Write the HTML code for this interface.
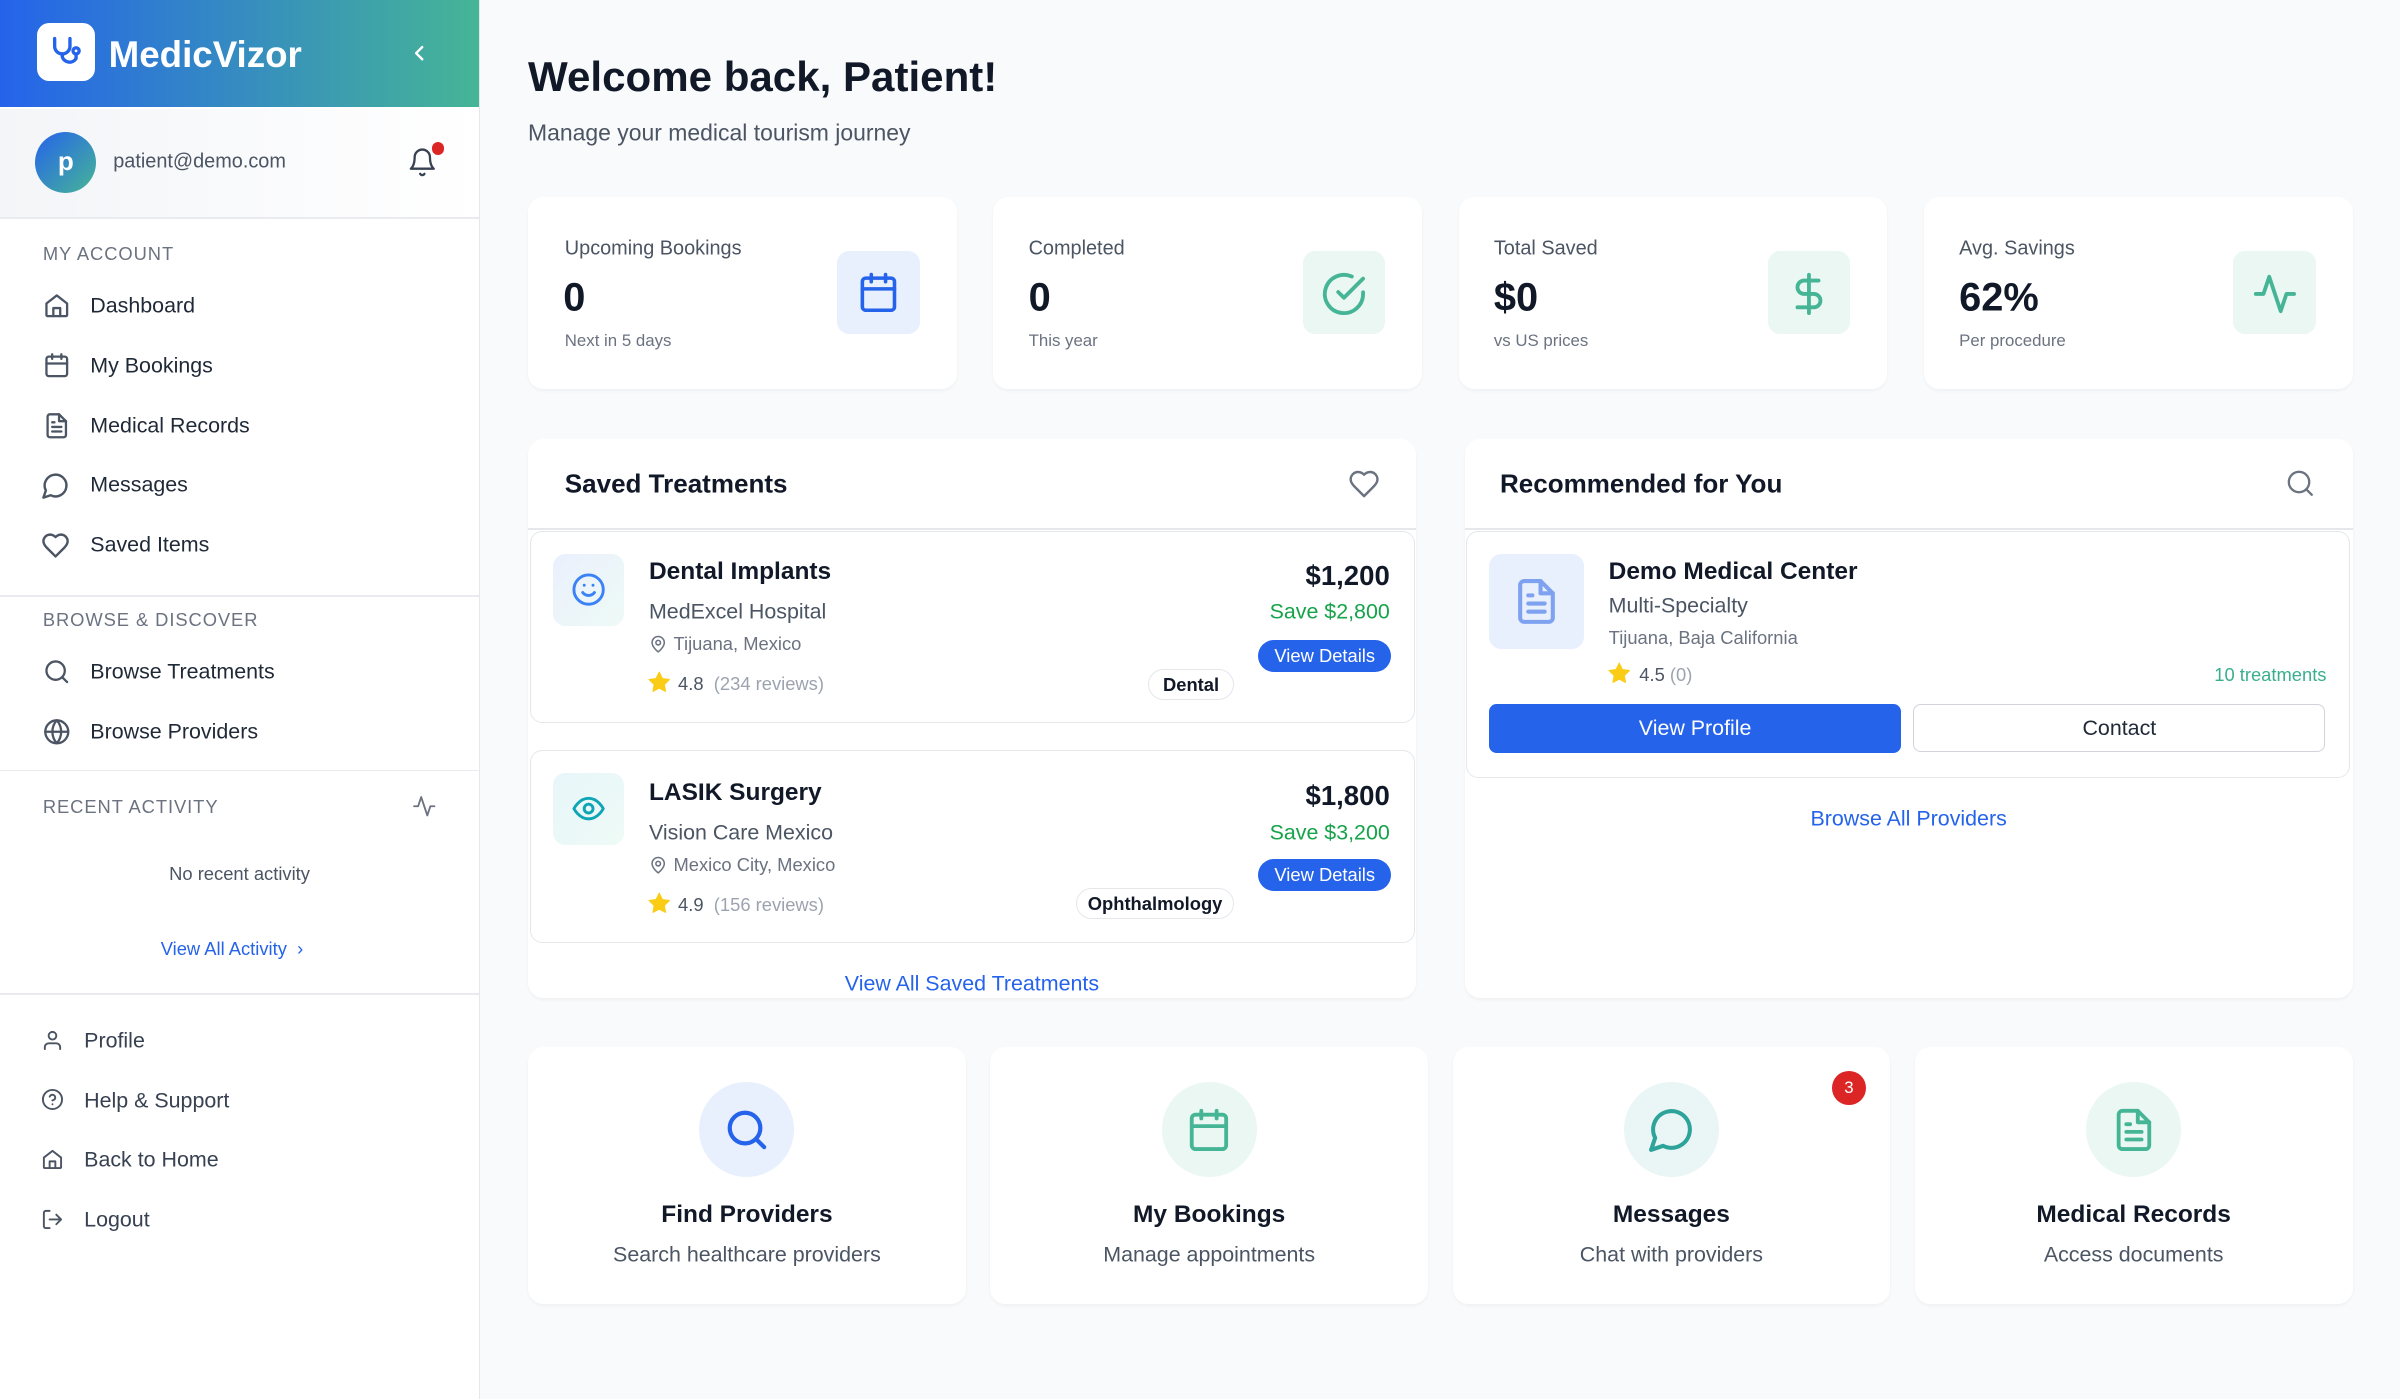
<!DOCTYPE html>
<html><head><meta charset="utf-8"><style>
html,body{margin:0;padding:0;}
body{width:2400px;height:1398px;overflow:hidden;background:#f8fafc;font-family:"Liberation Sans",sans-serif;}
#z{zoom:1.5306;width:1568px;height:914px;position:relative;}
.a{position:absolute;}
.c{position:absolute;transform:translateY(-50%);white-space:nowrap;}
.side{left:0;top:0;width:313px;height:914px;background:#fff;border-right:1px solid #e5e7eb;}
.hl{height:1px;background:#e9ebef;left:0;width:313px;}
.sec{font-size:12px;color:#6b7280;letter-spacing:.6px;font-weight:500;left:28px;}
.nav{font-size:14px;color:#1f2937;left:59px;font-weight:500;}
.nav2{font-size:14px;color:#374151;left:55px;}
svg{position:absolute;fill:none;stroke-linecap:round;stroke-linejoin:round;}
svg.star{fill:#facc15;}
.card{background:#fff;border-radius:10px;box-shadow:0 1px 2px rgba(0,0,0,.04);}
.lbl{font-size:13px;color:#4b5563;}
.val{font-size:26px;font-weight:700;color:#111827;}
.sub{font-size:11px;color:#6b7280;}
.ib{border-radius:8px;width:54px;height:54px;top:164px;}
.item{border:1px solid #e5e7eb;border-radius:8px;background:#fff;}
.t16{font-size:16px;font-weight:600;color:#111827;}
.g14{font-size:14px;color:#4b5563;}
.g12{font-size:12px;color:#6b7280;}
.btn{background:#2563eb;color:#fff;font-size:12px;border-radius:11px;text-align:center;line-height:21px;}
.tag{border:1px solid #e5e7eb;border-radius:11px;font-size:12px;font-weight:600;color:#111827;text-align:center;line-height:19px;}
.link{color:#2563eb;font-size:14px;font-weight:500;text-align:center;}
.bc{top:684px;width:286px;height:168px;}
.circ{width:62px;height:62px;border-radius:50%;left:112px;top:23px;}
.bt{font-size:16px;font-weight:600;color:#111827;width:100%;text-align:center;top:110px;}
.bs{font-size:14px;color:#4b5563;width:100%;text-align:center;top:136px;}
</style></head><body><div id="z">

<div class="a side"></div>
<div class="a" style="left:0;top:0;width:313px;height:70px;background:linear-gradient(90deg,#2563eb,#46b596);"></div>
<div class="a" style="left:24px;top:15px;width:38px;height:38px;background:#fff;border-radius:8px;"></div>
<svg style="left:31px;top:22px" width="24" height="24" viewBox="0 0 24 24" stroke="#2563eb" stroke-width="2.2"><path d="M5 3v5a5 5 0 0 0 10 0V3"/><path d="M10 13v2a5 5 0 0 0 9 1v-2"/><circle cx="19" cy="11" r="2"/></svg>
<div class="c" style="left:71px;top:36px;font-size:24px;font-weight:700;color:#fff;">MedicVizor</div>
<svg style="left:268px;top:29px" width="12" height="12" viewBox="0 0 12 12" stroke="#fff" stroke-width="1.6"><path d="M8 2L4 6l4 4"/></svg>
<div class="a" style="left:0;top:71px;width:313px;height:71px;background:linear-gradient(90deg,#f3f5f8,#fff);"></div>
<div class="a" style="left:23px;top:86px;width:40px;height:40px;border-radius:50%;background:linear-gradient(135deg,#2563eb,#46b596);color:#fff;font-weight:700;font-size:17px;text-align:center;line-height:38px;">p</div>
<div class="c" style="left:74px;top:106px;font-size:13px;color:#4b5563;">patient@demo.com</div>
<svg style="left:266px;top:96px" width="20" height="20" viewBox="0 0 24 24" stroke="#374151" stroke-width="1.8"><path d="M6 8a6 6 0 0 1 12 0c0 7 3 9 3 9H3s3-2 3-9"/><path d="M10.3 21a1.9 1.9 0 0 0 3.4 0"/></svg>
<div class="a" style="left:282px;top:93px;width:8px;height:8px;border-radius:50%;background:#dc2626;"></div>
<div class="a hl" style="top:142px"></div>

<div class="c sec" style="top:166px">MY ACCOUNT</div>
<svg style="left:28px;top:191px" width="18" height="18" viewBox="0 0 24 24" stroke="#4b5563" stroke-width="2"><path d="M3 10l9-7 9 7v10a1 1 0 0 1-1 1H4a1 1 0 0 1-1-1z"/><path d="M9 21v-7h6v7"/></svg>
<div class="c nav" style="top:200px">Dashboard</div>
<svg style="left:28px;top:230px" width="18" height="18" viewBox="0 0 24 24" stroke="#4b5563" stroke-width="2"><rect x="3" y="4" width="18" height="17" rx="2"/><path d="M8 2v4M16 2v4M3 10h18"/></svg>
<div class="c nav" style="top:239px">My Bookings</div>
<svg style="left:28px;top:269px" width="18" height="18" viewBox="0 0 24 24" stroke="#4b5563" stroke-width="2"><path d="M14 2H6a2 2 0 0 0-2 2v16a2 2 0 0 0 2 2h12a2 2 0 0 0 2-2V8z"/><path d="M14 2v6h6M8 13h8M8 17h8M8 9h2"/></svg>
<div class="c nav" style="top:278px">Medical Records</div>
<svg style="left:27px;top:308px" width="19" height="19" viewBox="0 0 24 24" stroke="#4b5563" stroke-width="2"><path d="M7.9 20A9 9 0 1 0 4 16.1L2 22z"/></svg>
<div class="c nav" style="top:317px">Messages</div>
<svg style="left:27px;top:347px" width="19" height="19" viewBox="0 0 24 24" stroke="#4b5563" stroke-width="2"><path d="M19 14c1.5-1.5 3-3.2 3-5.5A5.5 5.5 0 0 0 16.5 3c-1.8 0-3 .5-4.5 2-1.5-1.5-2.7-2-4.5-2A5.5 5.5 0 0 0 2 8.5c0 2.300 1.5 4 3 5.5l7 7z"/></svg>
<div class="c nav" style="top:356px">Saved Items</div>
<div class="a hl" style="top:389px"></div>
<div class="c sec" style="top:405px">BROWSE &amp; DISCOVER</div>
<svg style="left:28px;top:430px" width="18" height="18" viewBox="0 0 24 24" stroke="#4b5563" stroke-width="2"><circle cx="11" cy="11" r="8"/><path d="M21 21l-4.3-4.3"/></svg>
<div class="c nav" style="top:439px">Browse Treatments</div>
<svg style="left:28px;top:469px" width="18" height="18" viewBox="0 0 24 24" stroke="#4b5563" stroke-width="2"><circle cx="12" cy="12" r="10"/><path d="M2 12h20M12 2a15 15 0 0 1 0 20 15 15 0 0 1 0-20"/></svg>
<div class="c nav" style="top:478px">Browse Providers</div>
<div class="a hl" style="top:503px"></div>
<div class="c sec" style="top:527px">RECENT ACTIVITY</div>
<svg style="left:269px;top:519px" width="16" height="16" viewBox="0 0 24 24" stroke="#6b7280" stroke-width="1.8"><path d="M22 12h-4l-3 9L9 3l-3 9H2"/></svg>
<div class="c" style="left:0;width:313px;text-align:center;top:571px;font-size:12px;color:#4b5563;">No recent activity</div>
<div class="c" style="left:105px;top:620px;font-size:12px;color:#2563eb;font-weight:500;">View All Activity &nbsp;›</div>
<div class="a hl" style="top:649px"></div>
<svg style="left:27px;top:672px" width="15" height="15" viewBox="0 0 24 24" stroke="#4b5563" stroke-width="2"><circle cx="12" cy="7" r="4"/><path d="M4 21v-2a4 4 0 0 1 4-4h8a4 4 0 0 1 4 4v2"/></svg>
<div class="c nav2" style="top:680px">Profile</div>
<svg style="left:27px;top:711px" width="15" height="15" viewBox="0 0 24 24" stroke="#4b5563" stroke-width="2"><circle cx="12" cy="12" r="10"/><path d="M9.1 9a3 3 0 0 1 5.8 1c0 2-3 3-3 3M12 17h.01"/></svg>
<div class="c nav2" style="top:719px">Help &amp; Support</div>
<svg style="left:27px;top:750px" width="15" height="15" viewBox="0 0 24 24" stroke="#4b5563" stroke-width="2"><path d="M3 10l9-7 9 7v10a1 1 0 0 1-1 1H4a1 1 0 0 1-1-1z"/><path d="M9 21v-7h6v7"/></svg>
<div class="c nav2" style="top:758px">Back to Home</div>
<svg style="left:27px;top:789px" width="15" height="15" viewBox="0 0 24 24" stroke="#4b5563" stroke-width="2"><path d="M9 21H5a2 2 0 0 1-2-2V5a2 2 0 0 1 2-2h4M16 17l5-5-5-5M21 12H9"/></svg>
<div class="c nav2" style="top:797px">Logout</div>

<div class="c" style="left:345px;top:50px;font-size:27.5px;font-weight:700;color:#111827;">Welcome back, Patient!</div>
<div class="c" style="left:345px;top:87px;font-size:15px;color:#4b5563;">Manage your medical tourism journey</div>

<div class="a card" style="left:345px;top:129px;width:280px;height:125px"></div>
<div class="c lbl" style="left:369px;top:163px">Upcoming Bookings</div>
<div class="c val" style="left:368px;top:195px">0</div>
<div class="c sub" style="left:369px;top:223px">Next in 5 days</div>
<div class="a ib" style="left:547px;background:#e8effd"></div>
<svg style="left:560px;top:177px" width="28" height="28" viewBox="0 0 24 24" stroke="#2563eb" stroke-width="2"><rect x="3" y="4" width="18" height="18" rx="2"/><path d="M8 2v4M16 2v4M3 10h18"/></svg>

<div class="a card" style="left:649px;top:129px;width:280px;height:125px"></div>
<div class="c lbl" style="left:672px;top:163px">Completed</div>
<div class="c val" style="left:672px;top:195px">0</div>
<div class="c sub" style="left:672px;top:223px">This year</div>
<div class="a ib" style="left:851px;background:#eaf7f2"></div>
<svg style="left:863px;top:177px" width="30" height="30" viewBox="0 0 24 24" stroke="#46b596" stroke-width="2"><path d="M22 11.1V12a10 10 0 1 1-5.9-9.1"/><path d="M22 4L12 14l-3-3"/></svg>

<div class="a card" style="left:953px;top:129px;width:280px;height:125px"></div>
<div class="c lbl" style="left:976px;top:163px">Total Saved</div>
<div class="c val" style="left:976px;top:195px">$0</div>
<div class="c sub" style="left:976px;top:223px">vs US prices</div>
<div class="a ib" style="left:1155px;background:#eaf7f2"></div>
<svg style="left:1167px;top:177px" width="30" height="30" viewBox="0 0 24 24" stroke="#46b596" stroke-width="2"><path d="M12 2v20M17 5H9.5a3.5 3.5 0 0 0 0 7h5a3.5 3.5 0 0 1 0 7H6"/></svg>

<div class="a card" style="left:1257px;top:129px;width:280px;height:125px"></div>
<div class="c lbl" style="left:1280px;top:163px">Avg. Savings</div>
<div class="c val" style="left:1280px;top:195px">62%</div>
<div class="c sub" style="left:1280px;top:223px">Per procedure</div>
<div class="a ib" style="left:1459px;background:#eaf7f2"></div>
<svg style="left:1471px;top:177px" width="30" height="30" viewBox="0 0 24 24" stroke="#46b596" stroke-width="2"><path d="M22 12h-4l-3 9L9 3l-3 9H2"/></svg>

<div class="a card" style="left:345px;top:287px;width:580px;height:365px"></div>
<div class="c" style="left:369px;top:316px;font-size:17px;font-weight:600;color:#111827;">Saved Treatments</div>
<svg style="left:881px;top:306px" width="21" height="21" viewBox="0 0 24 24" stroke="#6b7280" stroke-width="1.8"><path d="M19 14c1.5-1.5 3-3.2 3-5.5A5.5 5.5 0 0 0 16.5 3c-1.8 0-3 .5-4.5 2-1.5-1.5-2.7-2-4.5-2A5.5 5.5 0 0 0 2 8.5c0 2.3 1.5 4 3 5.5l7 7z"/></svg>
<div class="a" style="left:345px;top:345px;width:580px;height:1px;background:#e5e7eb"></div>

<div class="a item" style="left:346px;top:347px;width:577px;height:124px"></div>
<div class="a" style="left:361px;top:362px;width:47px;height:47px;border-radius:8px;background:linear-gradient(135deg,#eaf0fd,#eefaf6)"></div>
<svg style="left:373px;top:374px" width="23" height="23" viewBox="0 0 24 24" stroke="#3b82f6" stroke-width="2"><circle cx="12" cy="12" r="10"/><path d="M8 14s1.5 2 4 2 4-2 4-2M9 9h.01M15 9h.01"/></svg>
<div class="c t16" style="left:424px;top:374px">Dental Implants</div>
<div class="c g14" style="left:424px;top:400px">MedExcel Hospital</div>
<svg style="left:424px;top:415px" width="12" height="12" viewBox="0 0 24 24" stroke="#6b7280" stroke-width="2"><path d="M20 10c0 6-8 12-8 12s-8-6-8-12a8 8 0 0 1 16 0z"/><circle cx="12" cy="10" r="3"/></svg>
<div class="c g12" style="left:440px;top:421px">Tijuana, Mexico</div>
<svg class="star" style="left:423px;top:438px" width="16" height="16" viewBox="0 0 24 24" stroke="#facc15" stroke-width="1"><path d="M12 2l3.1 6.3 6.9 1-5 4.9 1.2 6.8L12 17.8 5.8 21l1.2-6.8-5-4.9 6.9-1z"/></svg>
<div class="c g12" style="left:443px;top:447px;color:#4b5563">4.8 &nbsp;<span style="color:#9ca3af">(234 reviews)</span></div>
<div class="c" style="right:660px;top:376px;font-size:18px;font-weight:600;color:#111827">$1,200</div>
<div class="c" style="right:660px;top:400px;font-size:14px;color:#16a34a;font-weight:500">Save $2,800</div>
<div class="a btn" style="left:822px;top:418px;width:87px;height:21px">View Details</div>
<div class="a tag" style="left:750px;top:437px;width:55px;height:19px">Dental</div>

<div class="a item" style="left:346px;top:490px;width:577px;height:125px"></div>
<div class="a" style="left:361px;top:505px;width:47px;height:47px;border-radius:8px;background:linear-gradient(135deg,#e8f6fa,#eefaf6)"></div>
<svg style="left:373px;top:517px" width="23" height="23" viewBox="0 0 24 24" stroke="#0ea5b7" stroke-width="2"><path d="M2 12s3.5-7 10-7 10 7 10 7-3.5 7-10 7S2 12 2 12z"/><circle cx="12" cy="12" r="3"/></svg>
<div class="c t16" style="left:424px;top:518px">LASIK Surgery</div>
<div class="c g14" style="left:424px;top:544px">Vision Care Mexico</div>
<svg style="left:424px;top:559px" width="12" height="12" viewBox="0 0 24 24" stroke="#6b7280" stroke-width="2"><path d="M20 10c0 6-8 12-8 12s-8-6-8-12a8 8 0 0 1 16 0z"/><circle cx="12" cy="10" r="3"/></svg>
<div class="c g12" style="left:440px;top:565px">Mexico City, Mexico</div>
<svg class="star" style="left:423px;top:582px" width="16" height="16" viewBox="0 0 24 24" stroke="#facc15" stroke-width="1"><path d="M12 2l3.1 6.3 6.9 1-5 4.9 1.2 6.8L12 17.8 5.8 21l1.2-6.8-5-4.9 6.9-1z"/></svg>
<div class="c g12" style="left:443px;top:591px;color:#4b5563">4.9 &nbsp;<span style="color:#9ca3af">(156 reviews)</span></div>
<div class="c" style="right:660px;top:520px;font-size:18px;font-weight:600;color:#111827">$1,800</div>
<div class="c" style="right:660px;top:544px;font-size:14px;color:#16a34a;font-weight:500">Save $3,200</div>
<div class="a btn" style="left:822px;top:561px;width:87px;height:21px">View Details</div>
<div class="a tag" style="left:703px;top:580px;width:102px;height:19px">Ophthalmology</div>
<div class="c link" style="left:345px;width:580px;top:643px">View All Saved Treatments</div>

<div class="a card" style="left:957px;top:287px;width:580px;height:365px"></div>
<div class="c" style="left:980px;top:316px;font-size:17px;font-weight:600;color:#111827;">Recommended for You</div>
<svg style="left:1493px;top:306px" width="20" height="20" viewBox="0 0 24 24" stroke="#6b7280" stroke-width="1.8"><circle cx="11" cy="11" r="8"/><path d="M21 21l-4.3-4.3"/></svg>
<div class="a" style="left:957px;top:345px;width:580px;height:1px;background:#e5e7eb"></div>
<div class="a item" style="left:958px;top:347px;width:576px;height:160px"></div>
<div class="a" style="left:973px;top:362px;width:62px;height:62px;border-radius:8px;background:#e8effd"></div>
<svg style="left:988px;top:377px" width="32" height="32" viewBox="0 0 24 24" stroke="#7fa2f0" stroke-width="2"><path d="M14 2H6a2 2 0 0 0-2 2v16a2 2 0 0 0 2 2h12a2 2 0 0 0 2-2V8z"/><path d="M14 2v6h6M8 13h8M8 17h8M8 9h2"/></svg>
<div class="c t16" style="left:1051px;top:374px">Demo Medical Center</div>
<div class="c g14" style="left:1051px;top:396px">Multi-Specialty</div>
<div class="c g12" style="left:1051px;top:417px">Tijuana, Baja California</div>
<svg class="star" style="left:1050px;top:432px" width="16" height="16" viewBox="0 0 24 24" stroke="#facc15" stroke-width="1"><path d="M12 2l3.1 6.3 6.9 1-5 4.9 1.2 6.8L12 17.8 5.8 21l1.2-6.8-5-4.9 6.9-1z"/></svg>
<div class="c g12" style="left:1071px;top:441px;color:#4b5563">4.5 <span style="color:#9ca3af">(0)</span></div>
<div class="c" style="right:48px;top:441px;font-size:12px;color:#3aaf8f;font-weight:500">10 treatments</div>
<div class="a" style="left:973px;top:460px;width:269px;height:32px;border-radius:5px;background:#2563eb;color:#fff;font-size:14px;text-align:center;line-height:32px">View Profile</div>
<div class="a" style="left:1250px;top:460px;width:268px;height:30px;border-radius:5px;border:1px solid #d1d5db;color:#1f2937;font-size:14px;text-align:center;line-height:31px">Contact</div>
<div class="c link" style="left:957px;width:580px;top:535px">Browse All Providers</div>

<div class="a card bc" style="left:345px"><div class="a circ" style="background:#e8effd"></div>
<svg style="left:128px;top:39px" width="30" height="30" viewBox="0 0 24 24" stroke="#2563eb" stroke-width="2.2"><circle cx="11" cy="11" r="8"/><path d="M21 21l-4.3-4.3"/></svg>
<div class="c bt">Find Providers</div><div class="c bs">Search healthcare providers</div></div>
<div class="a card bc" style="left:647px"><div class="a circ" style="background:#eaf7f2"></div>
<svg style="left:128px;top:39px" width="30" height="30" viewBox="0 0 24 24" stroke="#46b596" stroke-width="2"><rect x="3" y="4" width="18" height="18" rx="2"/><path d="M8 2v4M16 2v4M3 10h18"/></svg>
<div class="c bt">My Bookings</div><div class="c bs">Manage appointments</div></div>
<div class="a card bc" style="left:949px"><div class="a circ" style="background:#e9f6f5"></div>
<svg style="left:127px;top:38px" width="32" height="32" viewBox="0 0 24 24" stroke="#2ea39a" stroke-width="2"><path d="M7.9 20A9 9 0 1 0 4 16.1L2 22z"/></svg>
<div class="c bt">Messages</div><div class="c bs">Chat with providers</div>
<div class="a" style="left:248px;top:16px;width:22px;height:22px;border-radius:50%;background:#dc2626;color:#fff;font-size:11px;text-align:center;line-height:22px">3</div></div>
<div class="a card bc" style="left:1251px"><div class="a circ" style="background:#eaf7f2"></div>
<svg style="left:128px;top:39px" width="30" height="30" viewBox="0 0 24 24" stroke="#46b596" stroke-width="2"><path d="M14 2H6a2 2 0 0 0-2 2v16a2 2 0 0 0 2 2h12a2 2 0 0 0 2-2V8z"/><path d="M14 2v6h6M8 13h8M8 17h8M8 9h2"/></svg>
<div class="c bt">Medical Records</div><div class="c bs">Access documents</div></div>

</div></body></html>
